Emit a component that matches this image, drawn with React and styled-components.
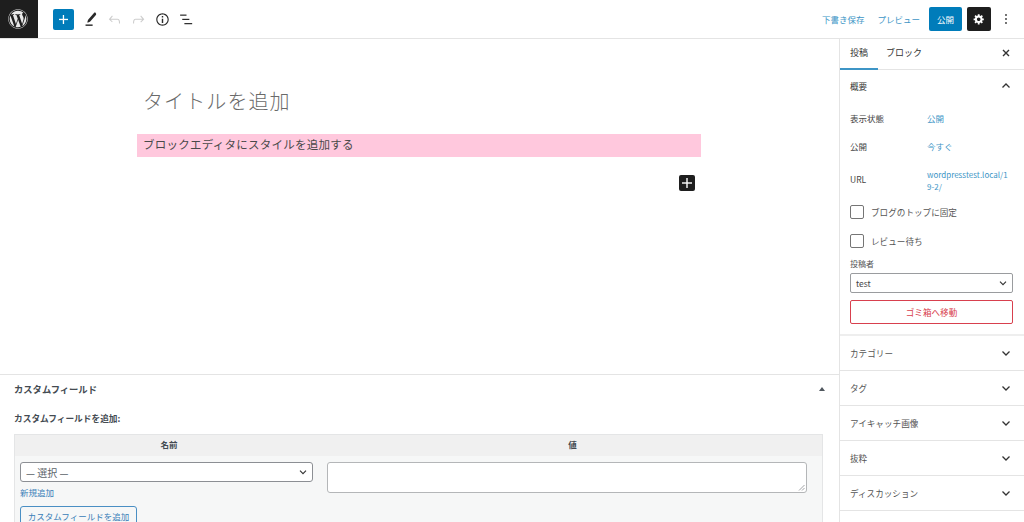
import React from 'react';
import styled, { createGlobalStyle } from 'styled-components';
import { FaWordpress } from 'react-icons/fa';

const GlobalStyle = createGlobalStyle`
    html, body {
        margin: 0;
        padding: 0;
        background: #fff;
    }
    body {
        font-family: "Noto Sans CJK JP", "Noto Sans", Roboto, sans-serif;
        color: #1e1e1e;
    }
    * {
        box-sizing: border-box;
    }
`

const Page = styled.div`
    width: 1024px;
    height: 522px;
    display: flex;
    flex-direction: column;
    overflow: hidden;
`

// Top toolbar

const TopBar = styled.header`
    height: 39px;
    flex: none;
    display: flex;
    align-items: center;
    border-bottom: 1px solid #e4e4e4;
`

const LogoBox = styled.div`
    width: 38px;
    height: 38px;
    padding-right: 2px;
    background: #1e1e1e;
    color: #e8e8e8;
    display: flex;
    align-items: center;
    justify-content: center;
`

const LeftTools = styled.div`
    display: flex;
    align-items: center;
    margin-left: 15px;
    gap: 7px;
`

const SquareButton = styled.button`
    width: ${props => props.$size || 21}px;
    height: ${props => props.$height || props.$size || 21}px;
    padding: 0;
    border: none;
    border-radius: 2px;
    background: ${props => props.$bg};
    color: #fff;
    display: flex;
    align-items: center;
    justify-content: center;
`

const ToolIcon = styled.svg`
    width: 17px;
    height: 17px;
    display: block;
    margin-left: ${props => props.$offset || 0}px;
    fill: ${props => props.$muted ? '#cdcdcd' : '#2a2a2a'};
`

const RightTools = styled.div`
    margin-left: auto;
    display: flex;
    align-items: center;
`

const LinkButton = styled.span`
    font-size: 8.5px;
    color: #3d95c6;
    margin-right: ${props => props.$gap}px;
`

const PublishButton = styled.button`
    width: 33px;
    height: 24px;
    padding: 0;
    border: none;
    border-radius: 2px;
    background: #007cba;
    color: #fff;
    font-family: inherit;
    font-size: 8.5px;
    margin-right: 5px;
`

const DotsBox = styled.div`
    width: 30px;
    margin-right: 3px;
    display: flex;
    justify-content: center;
`

// Main area

const Body = styled.div`
    flex: 1;
    min-height: 0;
    display: flex;
`

const MainColumn = styled.main`
    flex: 1;
    min-width: 0;
    display: flex;
    flex-direction: column;
`

const Editor = styled.section`
    flex: 1;
    min-height: 0;
    padding: 46px 0 0 137px;
`

const PostTitle = styled.h1`
    margin: 0 0 17px 6px;
    font-size: 20px;
    line-height: 32px;
    font-weight: 300;
    letter-spacing: 1.1px;
    color: #6a6a6a;
`

const StyledBlock = styled.p`
    margin: 0;
    width: 564px;
    height: 23px;
    padding-left: 6px;
    background: #ffc8dd;
    font-size: 11.5px;
    line-height: 21px;
    letter-spacing: 0.25px;
    color: #4a4a4a;
`

const BlockInserterRow = styled.div`
    width: 558px;
    display: flex;
    justify-content: flex-end;
    margin-top: 18px;
`

// Custom fields box

const MetaBox = styled.section`
    height: 148px;
    flex: none;
    border-top: 1px solid #e4e4e4;
    padding: 0 16px 0 14px;
`

const MetaHeading = styled.div`
    height: 28px;
    display: flex;
    align-items: center;
    justify-content: space-between;
    font-size: 9.3px;
    font-weight: 700;
    color: #444b52;
`

const CollapseArrow = styled.span`
    width: 0;
    height: 0;
    margin-right: -2px;
    border-left: 3px solid transparent;
    border-right: 3px solid transparent;
    border-bottom: 4px solid #50575e;
`

const AddLabel = styled.div`
    margin-top: 9px;
    font-size: 8.7px;
    line-height: 14px;
    font-weight: 700;
    color: #444b52;
`

const FieldTable = styled.div`
    margin-top: 8px;
    border: 1px solid #e4e5e6;
    background: #f6f7f7;
    display: grid;
    grid-template-columns: 308px 1fr;
    grid-template-rows: 21px auto;
    height: 120px;
`

const ColumnHead = styled.div`
    background: #f0f0f0;
    padding-bottom: 3px;
    display: flex;
    align-items: center;
    justify-content: center;
    font-size: 8.5px;
    font-weight: 700;
    color: #444b52;
`

const LeftCell = styled.div`
    padding: 6px 10px 0 5px;
`

const RightCell = styled.div`
    padding: 6px 15px 0 4px;
`

const FieldSelect = styled.div`
    height: 20px;
    border: 1px solid #8c8f94;
    border-radius: 3px;
    background: #fff;
    display: flex;
    align-items: center;
    justify-content: space-between;
    padding: 0 3px 0 5px;
    font-size: 10px;
    color: #5c636a;
`

const NewLink = styled.div`
    margin-top: 4px;
    font-size: 8.5px;
    line-height: 13px;
    color: #3a80b8;
`

const OutlineButton = styled.button`
    display: block;
    margin-top: 7px;
    width: 117px;
    height: 20px;
    padding: 0;
    border: 1px solid #4a8fc4;
    border-radius: 3px;
    background: #f6f7f7;
    color: #3a80b8;
    font-family: inherit;
    font-size: 8.5px;
`

const ValueArea = styled.div`
    position: relative;
    height: 31px;
    border: 1px solid #b4b6b8;
    border-radius: 3px;
    background: #fff;
`

const ResizeGrip = styled.svg`
    position: absolute;
    right: 1px;
    bottom: 1px;
    width: 7px;
    height: 7px;
    stroke: #a0a2a5;
    fill: none;
`

// Right settings sidebar

const Sidebar = styled.aside`
    width: 185px;
    flex: none;
    border-left: 1px solid #e4e4e4;
    display: flex;
    flex-direction: column;
`

const Tabs = styled.div`
    height: 31px;
    flex: none;
    display: flex;
    align-items: stretch;
    border-bottom: 1px solid #e4e4e4;
    padding-right: 12px;
`

const Tab = styled.div`
    display: flex;
    align-items: center;
    padding: 0 ${props => props.$active ? 10 : 8}px 2px;
    margin-bottom: -1px;
    font-size: 9px;
    color: #333;
    border-bottom: ${props => props.$active ? '2px solid #3d95c6' : '2px solid transparent'};
`

const CloseBox = styled.div`
    margin-left: auto;
    padding-bottom: 2px;
    display: flex;
    align-items: center;
`

const SummaryPanel = styled.div`
    height: 266px;
    flex: none;
    padding: 0 11px 0 10px;
    border-bottom: 2px solid #eeeeee;
`

const PanelHeader = styled.div`
    height: ${props => props.$height}px;
    display: flex;
    align-items: center;
    justify-content: space-between;
    font-size: 8.6px;
    color: #333;
`

const SummaryHeader = styled(PanelHeader)`
    padding-bottom: 2px;
`

const CollapsedPanel = styled(PanelHeader)`
    flex: none;
    padding: 0 11px 0 10px;
    border-bottom: 1px solid #e4e4e4;
    color: #555;
`

const InfoRow = styled.div`
    display: flex;
    height: ${props => props.$height}px;
    align-items: ${props => props.$top ? 'flex-start' : 'center'};
    font-size: 8.5px;
    color: #444;
`

const InfoLabel = styled.span`
    width: 77px;
    flex: none;
    padding-top: ${props => props.$top ? 14 : 0}px;
`

const InfoValue = styled.span`
    color: #3d95c6;
    width: 83px;
    font-size: ${props => props.$top ? 8 : 8.5}px;
    line-height: 12px;
    word-break: break-all;
    margin-top: ${props => props.$top ? 10 : 0}px;
`

const CheckRow = styled.div`
    height: 29px;
    display: flex;
    align-items: center;
    gap: 7px;
    font-size: 8.6px;
    color: #555;
`

const CheckBox = styled.span`
    width: 14px;
    height: 14px;
    flex: none;
    border: 1px solid #757575;
    border-radius: 2px;
`

const AuthorLabel = styled.div`
    margin-top: 3px;
    font-size: 8px;
    line-height: 12px;
    color: #555;
`

const AuthorSelect = styled.div`
    margin-top: 3px;
    height: 20px;
    border: 1px solid #9a9c9f;
    border-radius: 2px;
    display: flex;
    align-items: center;
    justify-content: space-between;
    padding: 0 3px 0 5px;
    font-size: 8.5px;
    color: #444;
`

const TrashButton = styled.button`
    display: block;
    width: 100%;
    height: 24px;
    margin-top: 7px;
    padding: 0;
    border: 1px solid #d8404e;
    border-radius: 2px;
    background: #fff;
    color: #d8404e;
    font-family: inherit;
    font-size: 8.6px;
`

const Chevron = ({ up, size = 14 }) => (
    <svg width={size} height={size} viewBox="0 0 14 14" fill="none" stroke="#333" strokeWidth="1.3">
        <polyline points={up ? '3.5,8.5 7,5 10.5,8.5' : '3.5,5.5 7,9 10.5,5.5'} />
    </svg>
)

const panels = ['カテゴリー', 'タグ', 'アイキャッチ画像', '抜粋', 'ディスカッション']

const App = () => {
    return (
        <Page>
            <GlobalStyle />

            <TopBar>
                <LogoBox>
                    <FaWordpress size={20} />
                </LogoBox>
                <LeftTools>
                    <SquareButton $bg="#007cba">
                        <svg width="11" height="11" viewBox="0 0 11 11" fill="#fff">
                            <rect x="4.8" y="1" width="1.3" height="9" />
                            <rect x="1" y="4.8" width="9" height="1.3" />
                        </svg>
                    </SquareButton>
                    <ToolIcon viewBox="0 0 24 24" $offset={1}>
                        <path d="M19.2 2.6c-.7-.6-1.7-.5-2.3.2l-8 9.3c-.5.6-1 1.9-1.2 3l-.3 1.3 1.3-.2c1.1-.2 2.4-.8 2.9-1.4l8-9.3c.6-.7.5-1.7-.2-2.3z" />
                        <rect x="5" y="19" width="10" height="2" />
                    </ToolIcon>
                    <ToolIcon viewBox="0 0 24 24" $muted>
                        <path d="M18.3 11.7c-.6-.6-1.4-.9-2.3-.9H6.7l2.9-3.3-1.1-1-4.5 5L8.5 16l1-1-2.7-2.7H16c.5 0 .9.2 1.3.5 1 1 1 3.4 1 4.5v.3h1.5v-.2c0-1.5 0-4.3-1.5-5.7z" />
                    </ToolIcon>
                    <ToolIcon viewBox="0 0 24 24" $muted>
                        <path d="M15.6 6.5l-1.1 1 2.9 3.3H8c-.9 0-1.7.3-2.3.9-1.4 1.5-1.4 4.2-1.4 5.6v.2h1.5v-.3c0-1.1 0-3.5 1-4.5.3-.3.7-.5 1.3-.5h9.2L14.5 15l1.1 1.1 4.6-4.6-4.6-5z" />
                    </ToolIcon>
                    <ToolIcon viewBox="0 0 24 24">
                        <path d="M12 3.2c-4.8 0-8.8 3.9-8.8 8.8 0 4.8 3.9 8.8 8.8 8.8 4.8 0 8.8-3.9 8.8-8.8 0-4.8-4-8.8-8.8-8.8zm0 16c-4 0-7.2-3.3-7.2-7.2C4.8 8 8 4.8 12 4.8s7.2 3.3 7.2 7.2c0 4-3.2 7.2-7.2 7.2zM11 17h2v-6h-2v6zm0-8h2V7h-2v2z" />
                    </ToolIcon>
                    <ToolIcon viewBox="0 0 24 24">
                        <rect x="3" y="5" width="9" height="1.7" />
                        <rect x="6" y="11" width="10" height="1.7" />
                        <rect x="9" y="17" width="11" height="1.7" />
                    </ToolIcon>
                </LeftTools>

                <RightTools>
                    <LinkButton $gap={13}>下書き保存</LinkButton>
                    <LinkButton $gap={9}>プレビュー</LinkButton>
                    <PublishButton>公開</PublishButton>
                    <SquareButton $bg="#1e1e1e" $size={24} $height={24}>
                        <svg width="12" height="12" viewBox="0 0 20 20" fill="#fff">
                            <path d="M18 12h-2.18c-.17.7-.44 1.35-.81 1.93l1.54 1.54-2.1 2.1-1.54-1.54c-.58.36-1.23.63-1.91.79V19H8v-2.18c-.68-.16-1.33-.43-1.91-.79l-1.54 1.54-2.12-2.12 1.54-1.54c-.36-.58-.63-1.23-.79-1.91H1V9.03h2.17c.16-.7.44-1.35.8-1.94L2.43 5.55l2.1-2.1 1.54 1.54c.58-.37 1.24-.64 1.93-.81V2h3v2.18c.68.16 1.33.43 1.91.79l1.54-1.54 2.12 2.12-1.54 1.54c.36.59.64 1.24.8 1.94H18V12zm-8.5 1.5c1.66 0 3-1.34 3-3s-1.34-3-3-3-3 1.34-3 3 1.34 3 3 3z" />
                        </svg>
                    </SquareButton>
                    <DotsBox>
                        <svg width="4" height="12" viewBox="0 0 4 12" fill="#333">
                            <circle cx="2" cy="2" r="0.9" />
                            <circle cx="2" cy="6" r="0.9" />
                            <circle cx="2" cy="10" r="0.9" />
                        </svg>
                    </DotsBox>
                </RightTools>
            </TopBar>

            <Body>
                <MainColumn>
                    <Editor>
                        <PostTitle>タイトルを追加</PostTitle>
                        <StyledBlock>ブロックエディタにスタイルを追加する</StyledBlock>
                        <BlockInserterRow>
                            <SquareButton $bg="#1e1e1e" $size={16}>
                                <svg width="10" height="10" viewBox="0 0 10 10" fill="#fff">
                                    <rect x="4.3" y="0" width="1.4" height="10" />
                                    <rect x="0" y="4.3" width="10" height="1.4" />
                                </svg>
                            </SquareButton>
                        </BlockInserterRow>
                    </Editor>

                    <MetaBox>
                        <MetaHeading>
                            カスタムフィールド
                            <CollapseArrow />
                        </MetaHeading>
                        <AddLabel>カスタムフィールドを追加:</AddLabel>
                        <FieldTable>
                            <ColumnHead>名前</ColumnHead>
                            <ColumnHead>値</ColumnHead>
                            <LeftCell>
                                <FieldSelect>
                                    — 選択 —
                                    <Chevron size={12} />
                                </FieldSelect>
                                <NewLink>新規追加</NewLink>
                                <OutlineButton>カスタムフィールドを追加</OutlineButton>
                            </LeftCell>
                            <RightCell>
                                <ValueArea>
                                    <ResizeGrip viewBox="0 0 7 7">
                                        <path d="M1 6.5L6.5 1M4 6.5L6.5 4" />
                                    </ResizeGrip>
                                </ValueArea>
                            </RightCell>
                        </FieldTable>
                    </MetaBox>
                </MainColumn>

                <Sidebar>
                    <Tabs>
                        <Tab $active>投稿</Tab>
                        <Tab>ブロック</Tab>
                        <CloseBox>
                            <svg width="12" height="12" viewBox="0 0 12 12" stroke="#333" strokeWidth="1.4">
                                <path d="M3 3l6 6M9 3l-6 6" />
                            </svg>
                        </CloseBox>
                    </Tabs>

                    <SummaryPanel>
                        <SummaryHeader $height={33}>
                            概要
                            <Chevron up />
                        </SummaryHeader>
                        <InfoRow $height={29}>
                            <InfoLabel>表示状態</InfoLabel>
                            <InfoValue>公開</InfoValue>
                        </InfoRow>
                        <InfoRow $height={27}>
                            <InfoLabel>公開</InfoLabel>
                            <InfoValue>今すぐ</InfoValue>
                        </InfoRow>
                        <InfoRow $height={38} $top>
                            <InfoLabel $top>URL</InfoLabel>
                            <InfoValue $top>wordpresstest.local/19-2/</InfoValue>
                        </InfoRow>
                        <CheckRow>
                            <CheckBox />
                            ブログのトップに固定
                        </CheckRow>
                        <CheckRow>
                            <CheckBox />
                            レビュー待ち
                        </CheckRow>
                        <AuthorLabel>投稿者</AuthorLabel>
                        <AuthorSelect>
                            test
                            <Chevron size={12} />
                        </AuthorSelect>
                        <TrashButton>ゴミ箱へ移動</TrashButton>
                    </SummaryPanel>

                    {panels.map(name => (
                        <CollapsedPanel key={name} $height={35}>
                            {name}
                            <Chevron />
                        </CollapsedPanel>
                    ))}
                </Sidebar>
            </Body>
        </Page>
    )
}

export default App
